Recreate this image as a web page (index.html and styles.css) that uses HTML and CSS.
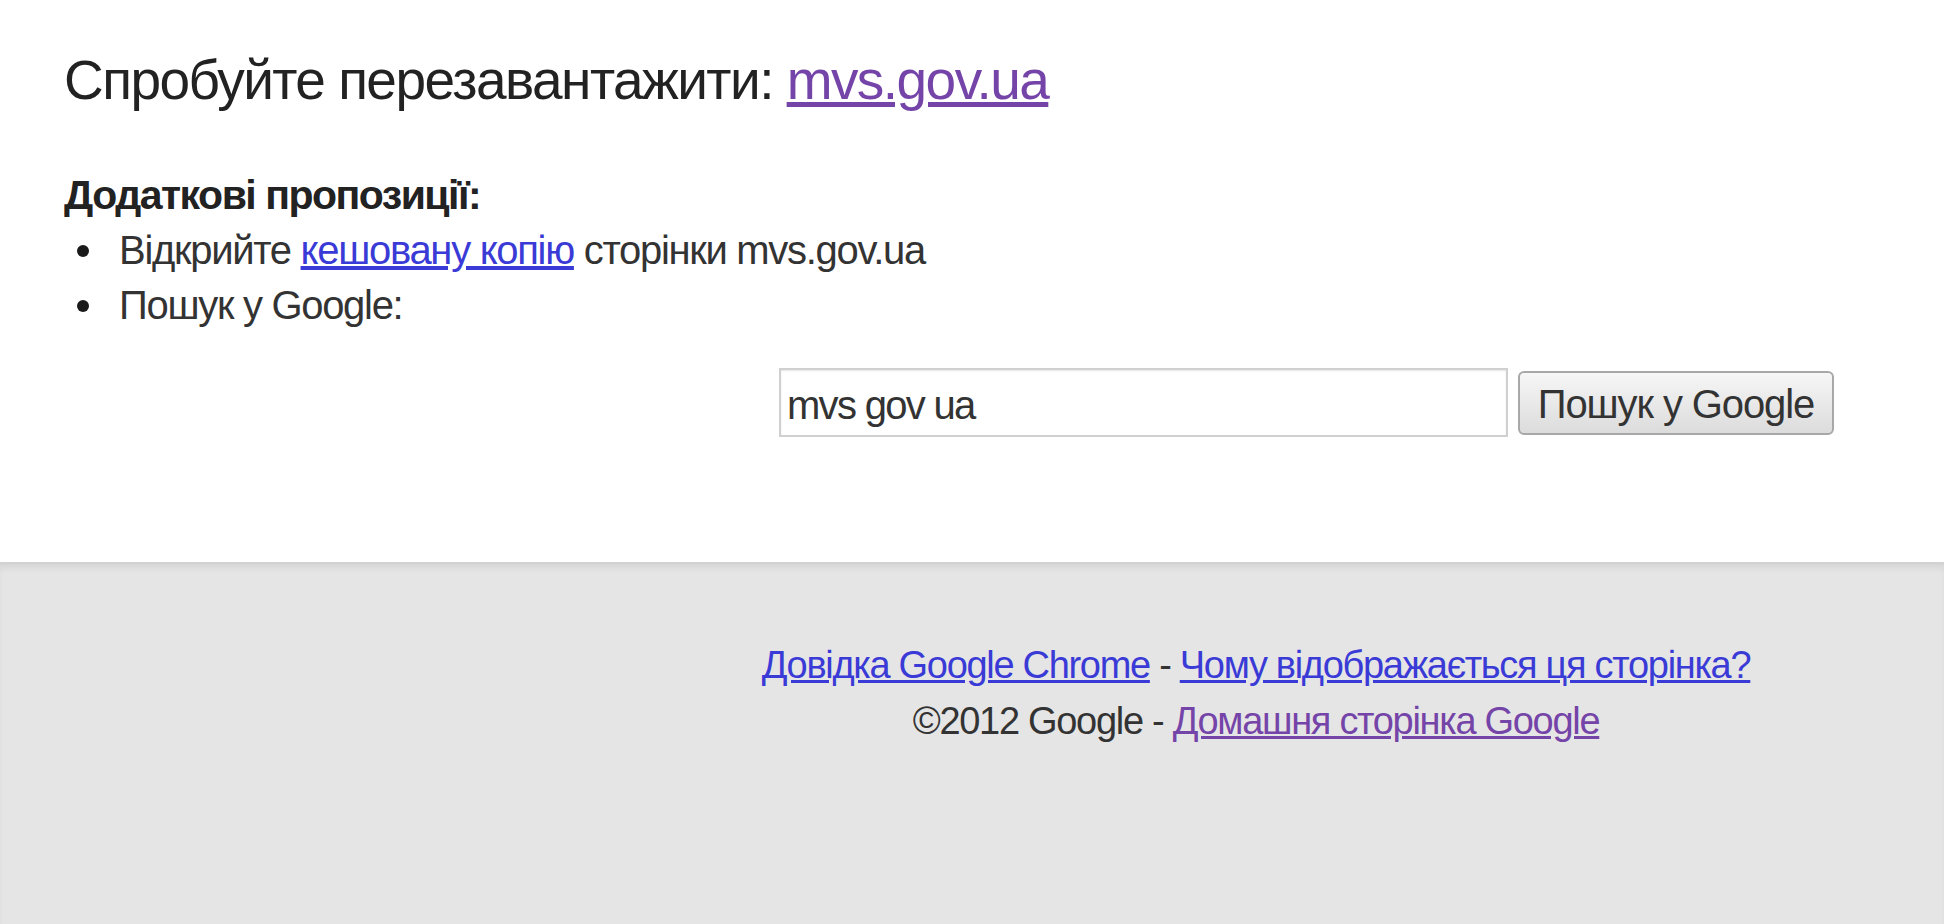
FILE: index.html
```html
<!DOCTYPE html>
<html lang="uk">

<head>
    <meta charset="UTF-8">
    <meta name="viewport" content="width=device-width, initial-scale=1.0">
    <title>mvs.gov.ua</title>
    <link rel="stylesheet" href="styles.css">
</head>

<body>
    <div class="main">
        <h1 class="reload">Спробуйте перезавантажити: <a href="#" class="visited">mvs.gov.ua</a></h1>

        <div class="suggestions">
            <h2>Додаткові пропозиції:</h2>
            <ul>
                <li>Відкрийте&nbsp;<a href="#">кешовану копію</a>&nbsp;сторінки mvs.gov.ua</li>
                <li>Пошук у Google:</li>
            </ul>
        </div>

        <form class="search-form">
            <input type="text" value="mvs gov ua">
            <button type="button">Пошук у Google</button>
        </form>
    </div>

    <div class="footer">
        <div class="footer-inner">
            <p><a href="#">Довідка Google Chrome</a> - <a href="#">Чому відображається ця сторінка?</a></p>
            <p>©2012 Google - <a href="#" class="visited">Домашня сторінка Google</a></p>
        </div>
    </div>
</body>

</html>
```

FILE: styles.css
```css
* {
    margin: 0;
    padding: 0;
    box-sizing: border-box;
}

html,
body {
    height: 100%;
}

body {
    font-family: 'Liberation Sans', Arial, sans-serif;
    font-size: 40px;
    color: #333;
    background: #fff;
    display: flex;
    flex-direction: column;
}

a {
    color: #3a3ad6;
}

a.visited {
    color: #7544a8;
}

.main {
    padding: 50px 64px 0;
}

.reload {
    font-size: 55px;
    font-weight: normal;
    line-height: 60px;
    letter-spacing: -1.55px;
    color: #222;
}

.suggestions {
    margin-top: 58px;
}

.suggestions h2 {
    font-size: 41px;
    font-weight: bold;
    line-height: 55px;
    letter-spacing: -1.5px;
    color: #222;
}

.suggestions ul {
    list-style: none;
    padding-left: 13px;
    line-height: 55px;
    letter-spacing: -1.3px;
}

.suggestions li {
    display: flex;
    align-items: center;
    white-space: pre;
}

.suggestions li::before {
    content: '';
    width: 12px;
    height: 12px;
    border-radius: 50%;
    background: #1a1a1a;
    margin-right: 30px;
    flex-shrink: 0;
}

.search-form {
    display: flex;
    justify-content: flex-end;
    align-items: center;
    gap: 10px;
    margin-top: 35px;
    padding-right: 46px;
}

.search-form input {
    width: 729px;
    height: 69px;
    padding: 5px 6px 0;
    border: 2px solid #d0d0d0;
    box-shadow: inset 0 1px 2px rgba(0, 0, 0, 0.1);
    font-family: inherit;
    font-size: 40px;
    letter-spacing: -1.7px;
    color: #333;
}

.search-form button {
    width: 316px;
    height: 64px;
    padding-top: 4px;
    border: 2px solid #a8a8a8;
    border-radius: 6px;
    background: linear-gradient(#f6f6f6, #dcdcdc);
    font-family: inherit;
    font-size: 40px;
    letter-spacing: -1.1px;
    color: #333;
}

.footer {
    flex: 1;
    margin-top: 125px;
    background: #e5e5e5;
    border-top: 2px solid #d2d2d2;
    box-shadow: inset 0 6px 6px -2px rgba(0, 0, 0, 0.07);
}

.footer-inner {
    padding: 73px 0 0 568px;
    text-align: center;
    font-size: 38px;
    line-height: 56px;
    letter-spacing: -1.3px;
}
```
